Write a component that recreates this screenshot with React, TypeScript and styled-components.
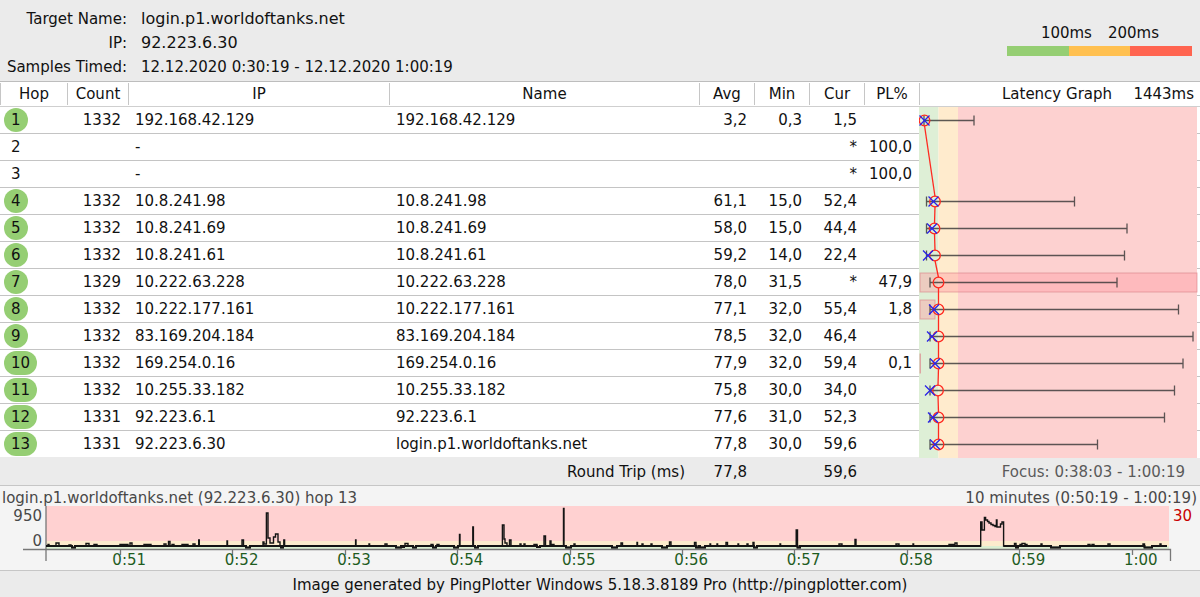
import React from 'react';
import styled, { createGlobalStyle } from 'styled-components';

const GlobalStyle = createGlobalStyle`
  * { box-sizing: border-box; }
  body {
    margin: 0;
    background: #ebebeb;
    color: #111;
    font-family: Verdana, "DejaVu Sans", sans-serif;
    font-size: 15px;
    line-height: 20px;
  }
`;

const Page = styled.main`
  display: flex;
  flex-direction: column;
  min-width: 900px;
`;

const Summary = styled.header`
  display: flex;
  justify-content: space-between;
  align-items: flex-start;
  padding: 7px 8px 2px;
`;

const Facts = styled.dl`
  display: grid;
  grid-template-columns: 119px auto;
  grid-auto-rows: 24px;
  column-gap: 14px;
  margin: 0;
  line-height: 24px;
  white-space: nowrap;
`;

const FactLabel = styled.dt`
  justify-self: end;
`;

const FactValue = styled.dd<{ $large?: boolean }>`
  margin: 0;
  font-size: ${(p) => (p.$large ? 16 : 15)}px;
`;

const Legend = styled.div`
  width: 185px;
  padding-top: 16px;
`;

const LegendLabels = styled.div`
  display: flex;
  justify-content: flex-end;
  gap: 16px;
  padding-right: 33px;
  margin-bottom: 3px;
`;

const LegendBar = styled.div`
  display: flex;
  height: 10px;
`;

const LegendPart = styled.div<{ $color: string }>`
  flex: 1;
  background: ${(p) => p.$color};
`;

const HopTable = styled.table`
  width: 100%;
  table-layout: fixed;
  border-collapse: separate;
  border-spacing: 0;
  background: #fff;
  border-top: 1px solid #bdbdbd;
`;

const Col = styled.col<{ $width?: number }>`
  width: ${(p) => (p.$width ? `${p.$width}px` : 'auto')};
`;

const HeadCell = styled.th`
  height: 25px;
  padding: 1px 0;
  border-bottom: 1px solid #cfcfcf;
  font-weight: normal;
`;

const HeadLabel = styled.div`
  height: 22px;
  line-height: 22px;
  border-left: 1px solid #c6c6c6;
`;

const GraphHead = styled(HeadLabel)`
  display: grid;
  grid-template-columns: 1fr auto 1fr;
  padding-right: 6px;
`;

const GraphTitle = styled.span`
  grid-column: 2;
`;

const GraphMax = styled.span`
  justify-self: end;
`;

const Cell = styled.td<{ $align?: 'left' | 'right'; $pad?: number }>`
  height: 27px;
  padding: 0 ${(p) => (p.$align === 'right' ? 7 : 0)}px 0
    ${(p) => (p.$align === 'right' ? 0 : p.$pad ?? 7)}px;
  border-bottom: 1px solid #c4c4c4;
  text-align: ${(p) => p.$align ?? 'left'};
  white-space: nowrap;

  tr:last-child > & {
    border-bottom-color: #ebebeb;
  }
`;

const HopBadge = styled.span<{ $on: boolean }>`
  display: block;
  width: fit-content;
  padding: 0 7px;
  border-radius: 12px;
  line-height: 24px;
  background: ${(p) => (p.$on ? '#95ce73' : 'transparent')};
`;

const GraphCell = styled.td`
  padding: 0;
  vertical-align: top;
`;

const Drawing = styled.svg`
  display: block;
`;

const FootCell = styled.td<{ $muted?: boolean }>`
  height: 27px;
  padding: 0 ${(p) => (p.$muted ? 15 : 7)}px 0 0;
  background: #ebebeb;
  color: ${(p) => (p.$muted ? '#5a5a5a' : 'inherit')};
  text-align: right;
  white-space: nowrap;
`;

const TripLabel = styled(FootCell)`
  padding-right: 14px;
`;

const Timeline = styled.section`
  border-top: 1px solid #c6c6c6;
  border-bottom: 1px solid #c6c6c6;
  background: #f4f4f4;
  color: #484848;
`;

const TimelineHead = styled.div`
  display: flex;
  justify-content: space-between;
  padding: 2px 3px 0 2px;
  height: 20px;
`;

const TimelineBody = styled.div`
  display: grid;
  grid-template-columns: 42px 1fr 30px;
  height: 64px;
`;

const Scale = styled.div`
  display: flex;
  flex-direction: column;
  gap: 5px;
  text-align: right;
`;

const Plot = styled.div`
  display: grid;
  min-width: 0;
`;

const PlotSvg = styled.svg`
  grid-area: 1 / 1;
  display: block;
  width: 100%;
  height: 56px;
  overflow: visible;
`;

const TimeLabels = styled.div`
  grid-area: 1 / 1;
  align-self: end;
  display: grid;
  grid-template-columns: repeat(10, 1fr);
  margin: 0 -27px 0 31px;
  color: #1f5c1f;
  text-align: center;
`;

const LossMax = styled.span`
  padding-left: 3px;
  color: #c80000;
`;

const Credit = styled.footer`
  padding: 4px 0 2px;
  text-align: center;
  line-height: 20px;
`;

type Hop = {
  hop: number;
  count?: string;
  ip: string;
  name?: string;
  avg?: string;
  min?: string;
  cur: string;
  loss?: string;
  mark?: { min: number; max: number; avg: number; cur?: number; loss?: number };
};

const hops: Hop[] = [
  { hop: 1, count: '1332', ip: '192.168.42.129', name: '192.168.42.129', avg: '3,2', min: '0,3', cur: '1,5', mark: { min: 5, max: 55, avg: 5.5, cur: 5.5 } },
  { hop: 2, ip: '-', cur: '*', loss: '100,0' },
  { hop: 3, ip: '-', cur: '*', loss: '100,0' },
  { hop: 4, count: '1332', ip: '10.8.241.98', name: '10.8.241.98', avg: '61,1', min: '15,0', cur: '52,4', mark: { min: 7.5, max: 155.5, avg: 16, cur: 14.5 } },
  { hop: 5, count: '1332', ip: '10.8.241.69', name: '10.8.241.69', avg: '58,0', min: '15,0', cur: '44,4', mark: { min: 7.5, max: 208, avg: 15.5, cur: 13 } },
  { hop: 6, count: '1332', ip: '10.8.241.61', name: '10.8.241.61', avg: '59,2', min: '14,0', cur: '22,4', mark: { min: 7.5, max: 205.5, avg: 16, cur: 9 } },
  { hop: 7, count: '1329', ip: '10.222.63.228', name: '10.222.63.228', avg: '78,0', min: '31,5', cur: '*', loss: '47,9', mark: { min: 11, max: 198, avg: 19.5, loss: 277 } },
  { hop: 8, count: '1332', ip: '10.222.177.161', name: '10.222.177.161', avg: '77,1', min: '32,0', cur: '55,4', loss: '1,8', mark: { min: 11, max: 259.5, avg: 19.5, cur: 15, loss: 15 } },
  { hop: 9, count: '1332', ip: '83.169.204.184', name: '83.169.204.184', avg: '78,5', min: '32,0', cur: '46,4', mark: { min: 11, max: 274, avg: 19.5, cur: 13 } },
  { hop: 10, count: '1332', ip: '169.254.0.16', name: '169.254.0.16', avg: '77,9', min: '32,0', cur: '59,4', loss: '0,1', mark: { min: 11, max: 264, avg: 19.5, cur: 16, loss: 0.5 } },
  { hop: 11, count: '1332', ip: '10.255.33.182', name: '10.255.33.182', avg: '75,8', min: '30,0', cur: '34,0', mark: { min: 11, max: 255.5, avg: 19, cur: 11 } },
  { hop: 12, count: '1331', ip: '92.223.6.1', name: '92.223.6.1', avg: '77,6', min: '31,0', cur: '52,3', mark: { min: 11, max: 245.5, avg: 19.5, cur: 14 } },
  { hop: 13, count: '1331', ip: '92.223.6.30', name: 'login.p1.worldoftanks.net', avg: '77,8', min: '30,0', cur: '59,6', mark: { min: 11, max: 178.5, avg: 19.5, cur: 16 } },
];

const ROW = 27;
const GRAPH_HEIGHT = ROW * hops.length;

function LatencyGraph() {
  const marks = hops
    .map((h, i) => ({ y: i * ROW + 13, m: h.mark }))
    .filter((h) => h.m) as { y: number; m: NonNullable<Hop['mark']> }[];
  return (
    <Drawing width="281" height={GRAPH_HEIGHT} viewBox={`0 0 281 ${GRAPH_HEIGHT}`} role="img" aria-label="Latency Graph">
      <rect width="19.5" height="100%" fill="#deefd6" />
      <rect x="19.5" width="19.5" height="100%" fill="#ffebcd" />
      <rect x="39" width="239" height="100%" fill="#fdd1d0" />
      {hops.slice(1).map((h, i) => (
        <rect key={h.hop} x="278" y={(i + 1) * ROW - 1} width="3" height="1" fill="#c4c4c4" />
      ))}
      {marks.map(({ y, m }) =>
        m.loss ? (
          <rect key={y} x="1" y={y - 9} width={m.loss} height="19" fill="#ff9aa2" fillOpacity=".42" stroke="#d98087" strokeOpacity=".6" />
        ) : null,
      )}
      <g stroke="#333" strokeOpacity=".8" strokeWidth="1.3" fill="none">
        {marks.map(({ y, m }) => (
          <path key={y} d={`M${m.min} ${y + 0.5}H${m.max}M${m.min} ${y - 4.5}v10M${m.max} ${y - 4.5}v10`} />
        ))}
      </g>
      <g stroke="#ff2a20" strokeWidth="1.3" fill="none">
        {marks.slice(1).map(({ y, m }, i) => (
          <line key={y} x1={marks[i].m.avg} y1={marks[i].y + 5.5} x2={m.avg} y2={y - 4.5} />
        ))}
        {marks.map(({ y, m }) => (
          <circle key={y} cx={m.avg} cy={y + 0.5} r="5.3" />
        ))}
      </g>
      <g stroke="#2a22e8" strokeWidth="1.3" fill="none">
        {marks.map(({ y, m }) =>
          m.cur ? (
            <path key={y} d={`M${m.cur - 5} ${y - 4.5}l10 10m0 -10l-10 10`} />
          ) : null,
        )}
      </g>
    </Drawing>
  );
}

/* Latency samples of the last hop: [from, to, level], level counted upwards in plot units. */
const BASE = 40;
const samples: [number, number, number][] = [
  [48, 49, 1.5], [56, 59, 3], [69, 71, 1], [72, 75, -1.5], [86, 89, 2.5], [94, 97, 1.5], [120, 128, 1.5],
  [130, 132, 3], [144, 151, 1.5], [164, 166, 2], [168.5, 170, 4.5], [172, 174, 1.5], [182, 188, 1.5],
  [193, 195, 2], [198.7, 199.3, 6], [227, 227.5, 5], [242, 243.5, 6], [246, 250, -1.5], [263, 264, 4],
  [264, 266, 2], [266.4, 267.8, 33], [268, 270, 8], [270, 273, 3], [273.5, 275, 9], [275.5, 277.5, 12],
  [278, 280, 4], [281, 283, -1.5], [283.8, 284.6, 6], [355.6, 356, 6], [369, 369.6, 2], [385, 387, 2],
  [396, 401, -1.5], [402, 404, -1], [405, 408, 2.5], [413, 416, -1.5], [431, 433, 1.5], [433, 436, -1.5],
  [437, 439, 1.5], [454, 458, -1.5], [459.5, 460, 11.5], [472.8, 473.4, 19], [475, 478, -1.5],
  [502.4, 504, 21], [504, 505, 7], [505, 507, 3], [509.5, 511, 6], [520, 521, 2], [524, 525, 2],
  [534, 537, 1.5], [537, 540, -1], [544, 545.5, 10], [550, 550.6, 5], [551, 554, 1.5], [563.5, 564, 37.5],
  [566, 571, -1.5], [574, 575, 2], [612, 617, -1.5], [621, 622.5, 3], [637, 637.5, 3.5], [642, 643, 2],
  [651, 652, 2], [662, 667, -1.5], [669.5, 671, 4], [694.5, 696, 3.5], [696, 698.5, -1.5], [700, 705, -1.5],
  [710, 710.6, 2], [717, 717.6, 2], [726, 727.5, 3.5], [738, 738.6, 2], [747, 748, 2], [753, 753.6, 3.5],
  [754, 757, -1.5], [780, 780.6, 2], [796.2, 797.2, 16], [797.5, 800, -1.5], [839, 842, 2], [855, 856, 6.5],
  [896, 899, 2], [913, 913.6, 2], [949, 954, 1.5], [955, 957, 3], [980.7, 981.8, 24], [982, 984, 16],
  [984.4, 985.4, 28.5], [985.6, 987.5, 26], [987.5, 989, 24.5], [989, 991, 23], [991, 993, 21.5],
  [993, 995, 20.5], [995, 996.4, 19.5], [996.4, 996.9, 26], [997, 1000.5, 19], [1000.5, 1001.5, 22],
  [1002, 1003.6, 24], [1014.5, 1015.5, 2.5], [1016, 1018, -1.5], [1020, 1022, 1.5], [1022, 1025, 2.5],
  [1025, 1027, 1.5], [1041, 1042, 2], [1051, 1060, -1.5], [1088, 1090, 1.5], [1092, 1094, 1.5],
  [1108, 1110, 2], [1143, 1144, 2], [1144.5, 1152, -1.5], [1160, 1161, 2],
];

function tracePath() {
  let d = `M47 ${BASE}`;
  let last = 47;
  samples.forEach(([from, to, level]) => {
    if (from - last > 0.7) d += `V${BASE}`;
    d += `H${from}V${BASE - level}H${to}`;
    last = to;
  });
  return `${d}V${BASE}H1167`;
}

/* The flat stretches and the dips, drawn heavier than the spikes; gaps are left under the long outage. */
function floorPath() {
  let d = `M46 ${BASE}`;
  samples.forEach(([from, to, level]) => {
    if (level < 0) d += `H${from}V${BASE - level}H${to}V${BASE}`;
  });
  return `${d}H1167`.replace(/H1016V/, `H981M1003.6 ${BASE}H1016V`);
}

const times = ['0:51', '0:52', '0:53', '0:54', '0:55', '0:56', '0:57', '0:58', '0:59', '1:00'];

const tickPath = times.map((_, i) => `M${120.5 + Math.round(i * 112.4)} 44v5`).join('');

function TimelineGraph() {
  return (
    <PlotSvg viewBox="42 0 1128 56" preserveAspectRatio="none" role="img" aria-label="Latency over ten minutes">
      <rect x="46" y="0" width="1123" height="35" fill="#ffd1d1" />
      <rect x="46" y="35" width="1123" height="5" fill="#fdebcd" />
      <rect x="46" y="40" width="1123" height="4" fill="#dcefd2" />
      <path d={`M23 43.5H1170.5V55M46 0V55${tickPath}`} fill="none" stroke="#777" strokeWidth="1.3" vectorEffect="non-scaling-stroke" />
      <path d={tracePath()} fill="none" stroke="#141414" strokeWidth="1.4" vectorEffect="non-scaling-stroke" />
      <path d={floorPath()} fill="none" stroke="#141414" strokeWidth="2" vectorEffect="non-scaling-stroke" />
    </PlotSvg>
  );
}

const columns = ['Hop', 'Count', 'IP', 'Name', 'Avg', 'Min', 'Cur', 'PL%'];

export default function App() {
  return (
    <>
      <GlobalStyle />
      <Page>
        <Summary>
          <Facts>
            <FactLabel>Target Name:</FactLabel>
            <FactValue $large>login.p1.worldoftanks.net</FactValue>
            <FactLabel>IP:</FactLabel>
            <FactValue $large>92.223.6.30</FactValue>
            <FactLabel>Samples Timed:</FactLabel>
            <FactValue>12.12.2020 0:30:19 - 12.12.2020 1:00:19</FactValue>
          </Facts>
          <Legend>
            <LegendLabels>
              <span>100ms</span>
              <span>200ms</span>
            </LegendLabels>
            <LegendBar>
              <LegendPart $color="#95ce73" />
              <LegendPart $color="#ffc050" />
              <LegendPart $color="#ff6450" />
            </LegendBar>
          </Legend>
        </Summary>

        <HopTable>
          <colgroup>
            <Col $width={67} />
            <Col $width={61} />
            <Col $width={261} />
            <Col />
            <Col $width={55} />
            <Col $width={55} />
            <Col $width={55} />
            <Col $width={55} />
            <Col $width={281} />
          </colgroup>
          <thead>
            <tr>
              {columns.map((c) => (
                <HeadCell key={c} scope="col">
                  <HeadLabel>{c}</HeadLabel>
                </HeadCell>
              ))}
              <HeadCell scope="col">
                <GraphHead>
                  <GraphTitle>Latency Graph</GraphTitle>
                  <GraphMax>1443ms</GraphMax>
                </GraphHead>
              </HeadCell>
            </tr>
          </thead>
          <tbody>
            {hops.map((h, i) => (
              <tr key={h.hop}>
                <Cell $pad={4}>
                  <HopBadge $on={Boolean(h.mark)}>{h.hop}</HopBadge>
                </Cell>
                <Cell $align="right">{h.count}</Cell>
                <Cell>{h.ip}</Cell>
                <Cell>{h.name}</Cell>
                <Cell $align="right">{h.avg}</Cell>
                <Cell $align="right">{h.min}</Cell>
                <Cell $align="right">{h.cur}</Cell>
                <Cell $align="right">{h.loss}</Cell>
                {i === 0 && (
                  <GraphCell rowSpan={hops.length}>
                    <LatencyGraph />
                  </GraphCell>
                )}
              </tr>
            ))}
          </tbody>
          <tfoot>
            <tr>
              <TripLabel colSpan={4}>Round Trip (ms)</TripLabel>
              <FootCell>77,8</FootCell>
              <FootCell />
              <FootCell>59,6</FootCell>
              <FootCell />
              <FootCell $muted>Focus: 0:38:03 - 1:00:19</FootCell>
            </tr>
          </tfoot>
        </HopTable>

        <Timeline>
          <TimelineHead>
            <span>login.p1.worldoftanks.net (92.223.6.30) hop 13</span>
            <span>10 minutes (0:50:19 - 1:00:19)</span>
          </TimelineHead>
          <TimelineBody>
            <Scale>
              <span>950</span>
              <span>0</span>
            </Scale>
            <Plot>
              <TimelineGraph />
              <TimeLabels>
                {times.map((t) => (
                  <span key={t}>{t}</span>
                ))}
              </TimeLabels>
            </Plot>
            <LossMax>30</LossMax>
          </TimelineBody>
        </Timeline>

        <Credit>Image generated by PingPlotter Windows 5.18.3.8189 Pro (http://pingplotter.com)</Credit>
      </Page>
    </>
  );
}
